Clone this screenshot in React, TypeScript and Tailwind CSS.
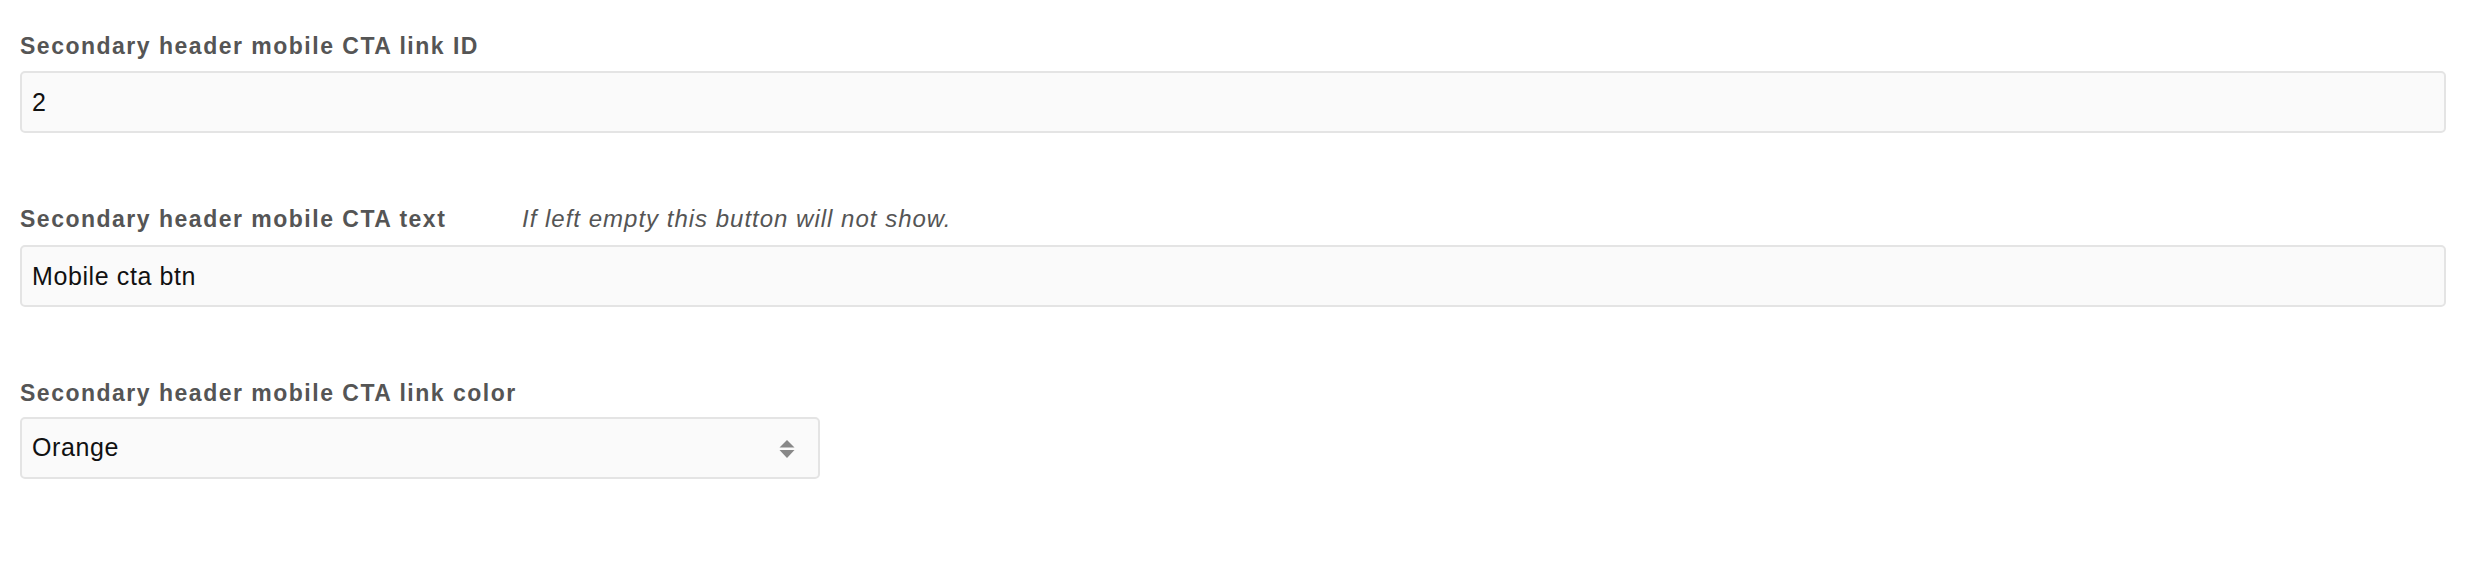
export default function App() {
  return (
    <div className="min-h-screen bg-white px-[20px] pt-[31px] font-['Liberation_Sans',Arial,sans-serif]">
      <div className="mb-[71px]">
        <label className="mb-[10px] block text-[23px] font-bold leading-[30px] tracking-[1.5px] text-[#555]">
          Secondary header mobile CTA link ID
        </label>
        <input
          readOnly
          value="2"
          className="block h-[62px] w-full rounded-[5px] border-2 border-[#e4e4e4] bg-[#fafafa] px-[10px] text-[25px] tracking-[0.6px] text-[#111] outline-none"
        />
      </div>

      <div className="mb-[71px]">
        <div className="mb-[11px] flex items-baseline leading-[30px]">
          <label className="w-[502px] text-[23px] font-bold tracking-[1.5px] text-[#555]">
            Secondary header mobile CTA text
          </label>
          <span className="text-[24px] italic tracking-[1px] text-[#555]">If left empty this button will not show.</span>
        </div>
        <input
          readOnly
          value="Mobile cta btn"
          className="block h-[62px] w-full rounded-[5px] border-2 border-[#e4e4e4] bg-[#fafafa] px-[10px] text-[25px] tracking-[0.6px] text-[#111] outline-none"
        />
      </div>

      <div>
        <label className="mb-[9px] block text-[23px] font-bold leading-[30px] tracking-[1.5px] text-[#555]">
          Secondary header mobile CTA link color
        </label>
        <div className="relative w-[800px]">
          <select
            defaultValue="Orange"
            className="block h-[62px] w-full appearance-none rounded-[5px] border-2 border-[#e4e4e4] bg-[#fafafa] px-[10px] text-[25px] tracking-[0.6px] text-[#111] outline-none"
          >
            <option>Orange</option>
            <option>Blue</option>
            <option>Green</option>
          </select>
          <svg
            className="pointer-events-none absolute right-[25px] top-[23px]"
            width="16"
            height="18"
            viewBox="0 0 16 18"
          >
            <path d="M8 0 L15.5 7.5 H0.5 Z" fill="#888" />
            <path d="M0.5 10 H15.5 L8 18 Z" fill="#888" />
          </svg>
        </div>
      </div>
    </div>
  );
}
